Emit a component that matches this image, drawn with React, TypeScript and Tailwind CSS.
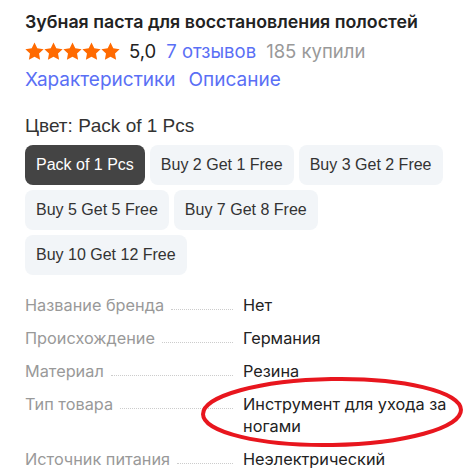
import React from "react";

const Star = () => (
  <svg width="19" height="19" viewBox="0 0 24 24" className="shrink-0">
    <path d="M12 0.6l3.5 7.3 8 1.1-5.8 5.6 1.4 7.9L12 18.7 4.9 22.5l1.4-7.9L0.5 9l8-1.1z" fill="#ff6a00" />
  </svg>
);

const options = [
  "Pack of 1 Pcs",
  "Buy 2 Get 1 Free",
  "Buy 3 Get 2 Free",
  "Buy 5 Get 5 Free",
  "Buy 7 Get 8 Free",
  "Buy 10 Get 12 Free",
];

const specs: [string, string][] = [
  ["Название бренда", "Нет"],
  ["Происхождение", "Германия"],
  ["Материал", "Резина"],
  ["Тип товара", "Инструмент для ухода за ногами"],
  ["Источник питания", "Неэлектрический"],
];

export default function App() {
  return (
    <div className="relative w-[466px] h-[468px] overflow-hidden bg-white pl-[25px] pr-[10px] pt-[11px] font-['Inter',sans-serif]">
      <h1 className="text-[17.8px] font-semibold leading-[22px] text-[#222] whitespace-nowrap">
        Зубная паста для восстановления полостей
      </h1>
      <div className="mt-[6px] flex items-center text-[18.5px] leading-[24px]">
        <div className="flex">
          <Star />
          <Star />
          <Star />
          <Star />
          <Star />
        </div>
        <span className="ml-[9px] text-[#222]">5,0</span>
        <span className="ml-[10px] text-[#5a6ff5]">7 отзывов</span>
        <span className="ml-[10px] text-[#999]">185 купили</span>
      </div>
      <div className="mt-[5px] flex gap-[13px] text-[19px] leading-[24px] text-[#5a6ff5] whitespace-nowrap">
        <span>Характеристики</span>
        <span>Описание</span>
      </div>
      <div className="mt-[22px] font-['Liberation_Sans',Arial,sans-serif] text-[19px] leading-[24px] text-[#333]">
        Цвет: Pack of 1 Pcs
      </div>
      <div className="mt-[7px] flex flex-wrap gap-[5px] w-[425px] font-['Liberation_Sans',Arial,sans-serif]">
        {options.map((o, i) => (
          <div
            key={o}
            className={
              i === 0
                ? "h-[40px] px-[11px] flex items-center rounded-[8px] bg-[#444] text-white text-[16px]"
                : "h-[40px] px-[11px] flex items-center rounded-[8px] bg-[#f2f5f8] text-[#333] text-[16px]"
            }
          >
            {o}
          </div>
        ))}
      </div>
      <div className="mt-[19px] flex flex-col gap-[11px] text-[16.3px] leading-[22px]">
        {specs.map(([k, v]) => (
          <div key={k} className="flex items-start">
            <div className="w-[208px] h-[22px] shrink-0 flex items-end text-[#999]">
              <span className="whitespace-nowrap">{k}</span>
              <span className="flex-1 ml-[7px] mb-[6px] border-b border-dotted border-[#ccc]"></span>
            </div>
            <div className="ml-[10px] w-[210px] text-[#222]">{v}</div>
          </div>
        ))}
      </div>
      <svg className="absolute left-0 top-0 pointer-events-none" width="466" height="468">
        <ellipse cx="332" cy="412" rx="129" ry="33" fill="none" stroke="#e8161e" strokeWidth="4" transform="rotate(-1 332 412)" />
      </svg>
    </div>
  );
}
